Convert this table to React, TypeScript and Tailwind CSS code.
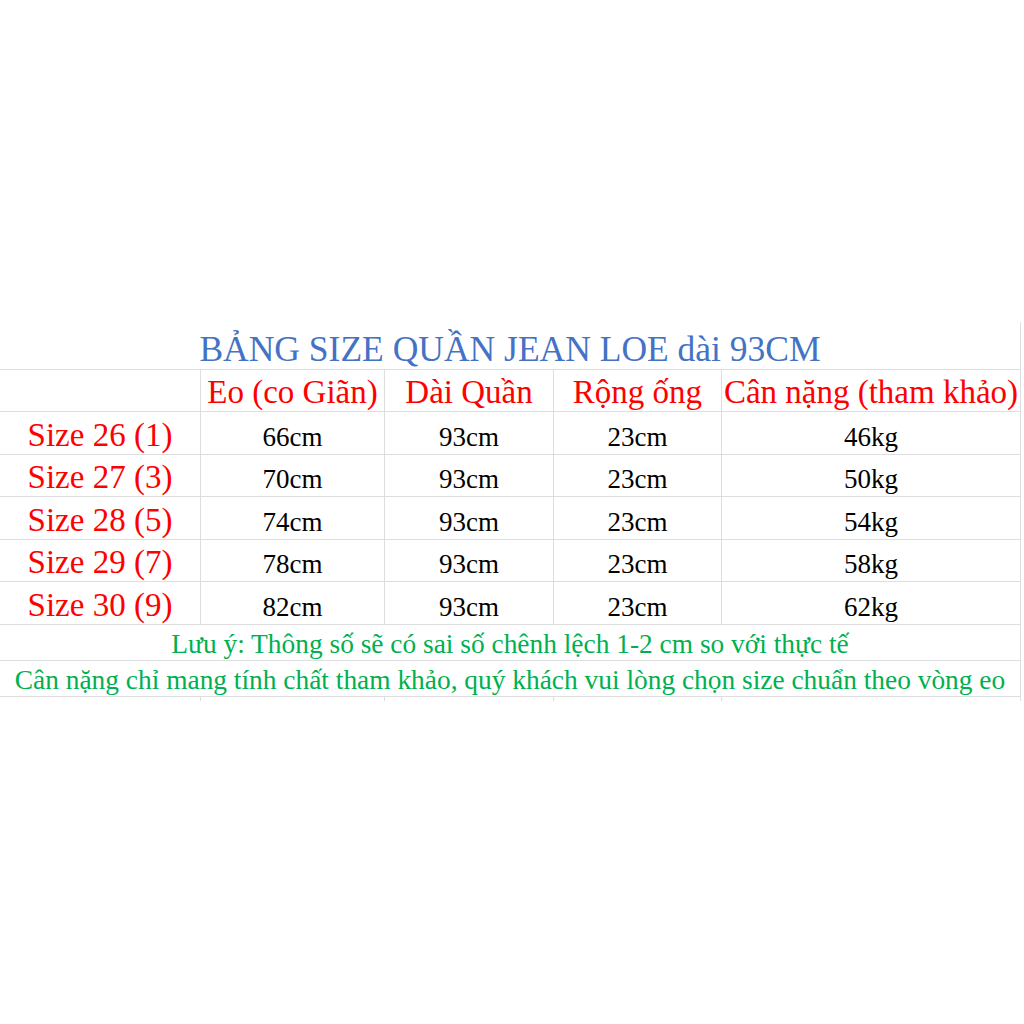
import React from "react";

const cols = "grid-cols-[201px_184px_169px_168px_299px]";
const line = "border-[#dedede]";

const rows = [
  { s: "Size 26 (1)", eo: "66cm", kg: "46kg", h: "h-[43px]" },
  { s: "Size 27 (3)", eo: "70cm", kg: "50kg", h: "h-[42px]" },
  { s: "Size 28 (5)", eo: "74cm", kg: "54kg", h: "h-[43px]" },
  { s: "Size 29 (7)", eo: "78cm", kg: "58kg", h: "h-[42px]" },
  { s: "Size 30 (9)", eo: "82cm", kg: "62kg", h: "h-[43px]" },
];

const headers = ["", "Eo (co Giãn)", "Dài Quần", "Rộng ống", "Cân nặng (tham khảo)"];

export default function App() {
  return (
    <div
      className="w-[1024px] h-[1024px] bg-white pt-[322px]"
      style={{ fontFamily: '"Liberation Serif", "Times New Roman", serif' }}
    >
      <div className={`w-[1022px] grid ${cols}`}>
        <div
          className={`col-span-5 h-[48px] flex items-end justify-center pb-[2px] border-b border-r ${line} text-[35.5px] leading-none text-[#4472c4] whitespace-nowrap`}
        >
          BẢNG SIZE QUẦN JEAN LOE dài 93CM
        </div>
        {headers.map((h, i) => (
          <div
            key={"h" + i}
            className={`h-[42px] flex items-end justify-center pb-[2px] border-b border-r ${line} text-[33px] leading-none text-[#ff0000] whitespace-nowrap`}
          >
            {h}
          </div>
        ))}
        {rows.map((r) => (
          <React.Fragment key={r.s}>
            <div
              className={`${r.h} flex items-end justify-center pb-[2px] border-b border-r ${line} text-[33px] leading-none text-[#ff0000] whitespace-nowrap`}
            >
              {r.s}
            </div>
            {[r.eo, "93cm", "23cm", r.kg].map((v, i) => (
              <div
                key={i}
                className={`${r.h} flex items-end justify-center pb-[3px] border-b border-r ${line} text-[27px] leading-none text-black whitespace-nowrap`}
              >
                {v}
              </div>
            ))}
          </React.Fragment>
        ))}
        <div
          className={`col-span-5 h-[36px] flex items-end justify-center pb-[2px] border-b border-r ${line} text-[27.4px] leading-none text-[#00b050] whitespace-nowrap`}
        >
          Lưu ý: Thông số sẽ có sai số chênh lệch 1-2 cm so với thực tế
        </div>
        <div
          className={`col-span-5 h-[36px] flex items-end justify-center pb-[2px] border-b border-r ${line} text-[27.4px] leading-none text-[#00b050] whitespace-nowrap`}
        >
          Cân nặng chỉ mang tính chất tham khảo, quý khách vui lòng chọn size chuẩn theo vòng eo
        </div>
        {[0, 1, 2, 3, 4].map((i) => (
          <div key={"s" + i} className={`h-[4px] border-r ${line}`} />
        ))}
      </div>
    </div>
  );
}
